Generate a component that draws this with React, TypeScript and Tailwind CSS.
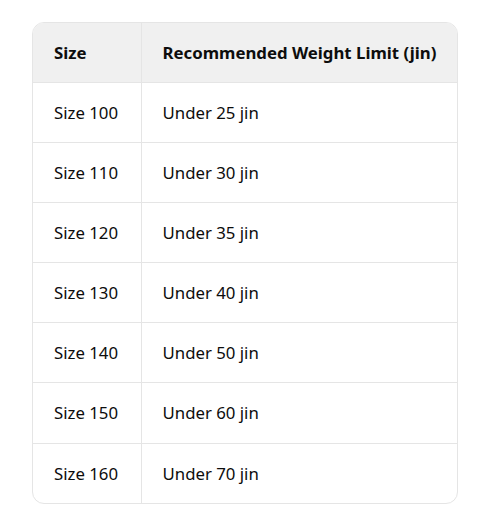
const rows = [
  ["Size 100", "Under 25 jin"],
  ["Size 110", "Under 30 jin"],
  ["Size 120", "Under 35 jin"],
  ["Size 130", "Under 40 jin"],
  ["Size 140", "Under 50 jin"],
  ["Size 150", "Under 60 jin"],
  ["Size 160", "Under 70 jin"],
]

export default function App() {
  return (
    <div className="min-h-screen bg-white pt-[22px] pl-[32px] font-['Noto_Sans',sans-serif] text-[16.8px] text-[#0d0d0d]">
      <div className="w-[426px] overflow-hidden rounded-[12px] border border-[#e5e5e5]">
        <table className="w-full border-collapse text-left">
          <thead>
            <tr className="h-[59px] bg-[#f0f0f0]">
              <th className="w-[108px] border-r border-[#e5e5e5] pl-[21px] font-bold">Size</th>
              <th className="pl-[21px] font-bold">Recommended Weight Limit (jin)</th>
            </tr>
          </thead>
          <tbody>
            {rows.map(([size, limit]) => (
              <tr key={size} className="h-[60.2px] border-t border-[#e5e5e5]">
                <td className="border-r border-[#e5e5e5] pl-[21px]">{size}</td>
                <td className="pl-[21px]">{limit}</td>
              </tr>
            ))}
          </tbody>
        </table>
      </div>
    </div>
  )
}
